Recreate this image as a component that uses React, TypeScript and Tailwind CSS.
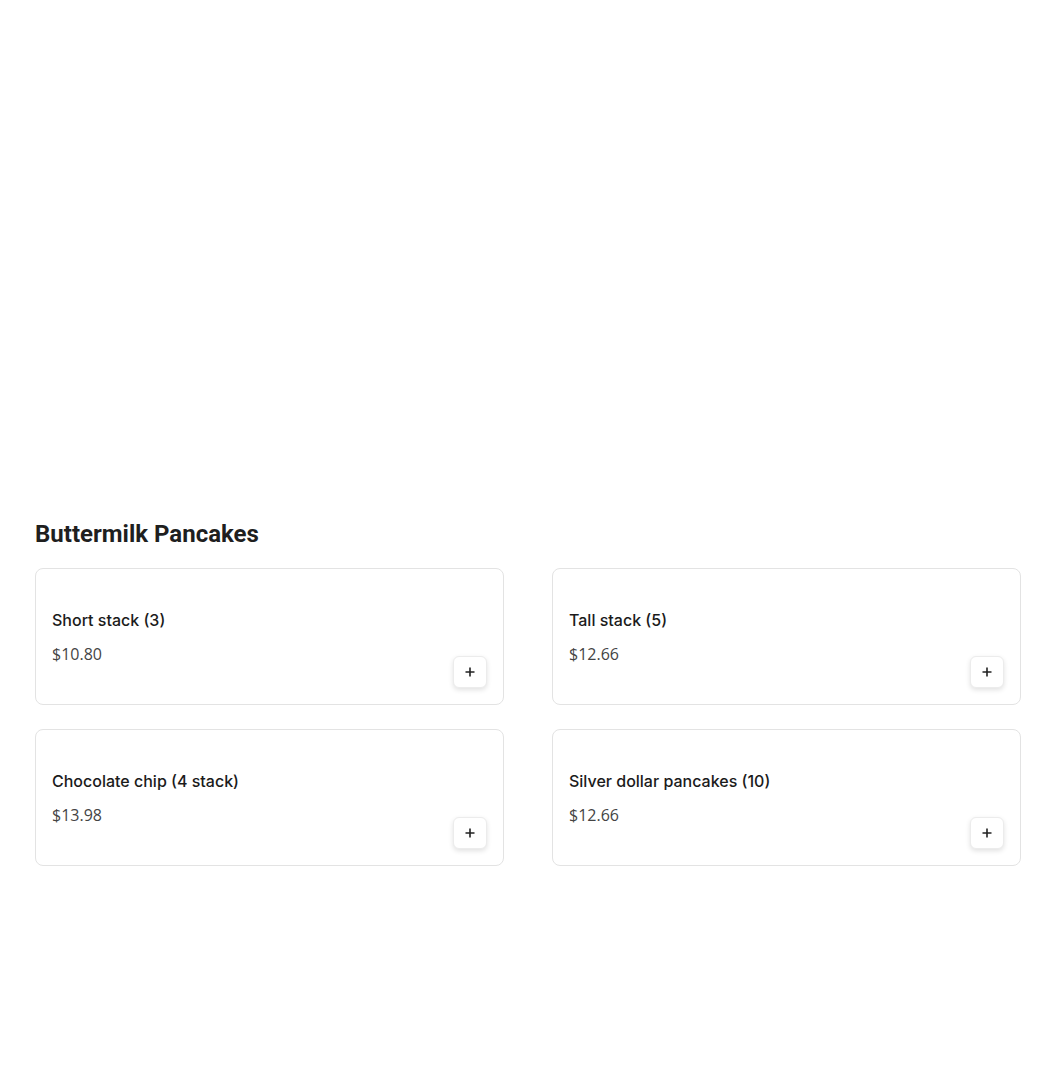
import React from 'react';

interface MenuItem {
  name: string;
  price: string;
}

const items: MenuItem[] = [
  { name: 'Short stack (3)', price: '$10.80' },
  { name: 'Tall stack (5)', price: '$12.66' },
  { name: 'Chocolate chip (4 stack)', price: '$13.98' },
  { name: 'Silver dollar pancakes (10)', price: '$12.66' },
];

const ItemCard: React.FC<{ item: MenuItem }> = ({ item }) => (
  <div className="flex h-[137px] items-end justify-between rounded-lg border border-[#e3e3e3] bg-white px-4 pb-4 pt-[39px]">
    <div className="flex flex-col gap-[10px] pb-[22px]">
      <span className="text-[16px] leading-6 font-medium text-[#1b1b1b]" style={{ fontFamily: 'Inter, sans-serif' }}>
        {item.name}
      </span>
      <span className="text-[16px] leading-6 text-[#444]">{item.price}</span>
    </div>
    <button className="flex h-8 w-[34px] items-center justify-center rounded-md border border-[#ececec] bg-white shadow-[0_2px_5px_rgba(0,0,0,0.12)]">
      <svg width="12" height="12" viewBox="0 0 12 12" fill="none">
        <path d="M6 1.5v9M1.5 6h9" stroke="#222" strokeWidth="1.6" />
      </svg>
    </button>
  </div>
);

export default function App() {
  return (
    <div className="min-h-[1092px] bg-white px-[35px] pt-[518px]" style={{ fontFamily: '"Open Sans", sans-serif' }}>
      <h2 className="text-2xl leading-8 font-bold text-[#1f1f1f]" style={{ fontFamily: 'Roboto, sans-serif' }}>
        Buttermilk Pancakes
      </h2>
      <div className="mt-[18px] grid w-[986px] grid-cols-2 gap-x-12 gap-y-6">
        {items.map((item) => (
          <ItemCard key={item.name} item={item} />
        ))}
      </div>
    </div>
  );
}
